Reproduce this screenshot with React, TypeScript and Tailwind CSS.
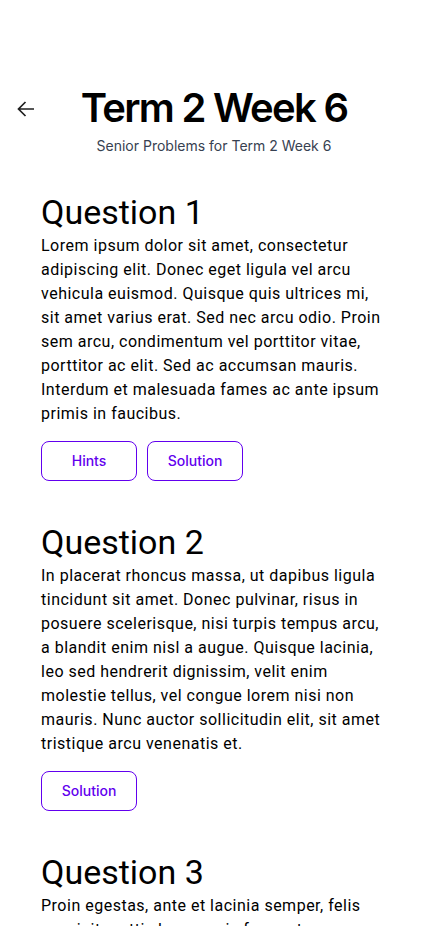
interface Question {
  title: string;
  body: string;
  actions: string[];
}

const questions: Question[] = [
  {
    title: "Question 1",
    body: "Lorem ipsum dolor sit amet, consectetur adipiscing elit. Donec eget ligula vel arcu vehicula euismod. Quisque quis ultrices mi, sit amet varius erat. Sed nec arcu odio. Proin sem arcu, condimentum vel porttitor vitae, porttitor ac elit. Sed ac accumsan mauris. Interdum et malesuada fames ac ante ipsum primis in faucibus.",
    actions: ["Hints", "Solution"],
  },
  {
    title: "Question 2",
    body: "In placerat rhoncus massa, ut dapibus ligula tincidunt sit amet. Donec pulvinar, risus in posuere scelerisque, nisi turpis tempus arcu, a blandit enim nisl a augue. Quisque lacinia, leo sed hendrerit dignissim, velit enim molestie tellus, vel congue lorem nisi non mauris. Nunc auctor sollicitudin elit, sit amet tristique arcu venenatis et.",
    actions: ["Solution"],
  },
  {
    title: "Question 3",
    body: "Proin egestas, ante et lacinia semper, felis suscipit mattis lacus, quis fermentum ex dolor quis lorem. Maecenas vel nibh et tortor aliquam posuere. Nulla facilisi.",
    actions: ["Hints", "Solution"],
  },
];

export default function App() {
  return (
    <div className="min-h-screen bg-white text-black font-['Roboto',sans-serif]">
      {/* Header */}
      <div className="grid grid-cols-[1fr_auto_1fr] items-center pt-[82px]">
        <button className="justify-self-start pl-[16px] mt-[2px] text-[#1f1f1f]">
          <svg width="20" height="20" viewBox="0 0 20 20" fill="none" stroke="currentColor" strokeWidth="1.7">
            <path d="M18 10H2.5M9.5 3 2.5 10l7 7" />
          </svg>
        </button>
        <h1 className="font-['Inter',sans-serif] font-semibold text-[40px] leading-[52px] tracking-[-1.7px] text-center">
          Term 2 Week 6
        </h1>
        <div />
      </div>
      <p className="font-['Inter',sans-serif] text-sm leading-5 text-[#374151] text-center mt-[2px]">
        Senior Problems for Term 2 Week 6
      </p>

      {/* Questions */}
      <div className="px-[41px] pt-[36px] flex flex-col gap-[41px]">
        {questions.map((q) => (
          <div key={q.title}>
            <h2 className="text-[34px] leading-[40px]">{q.title}</h2>
            <p className="text-base leading-6 tracking-[0.5px] mt-[2px]">{q.body}</p>
            <div className="flex gap-[10px] mt-[15px]">
              {q.actions.map((a) => (
                <button
                  key={a}
                  className="w-[96px] h-[40px] rounded-lg border border-[#6200ee] text-[#6200ee] font-['Inter',sans-serif] text-sm font-medium"
                >
                  {a}
                </button>
              ))}
            </div>
          </div>
        ))}
      </div>
    </div>
  );
}
